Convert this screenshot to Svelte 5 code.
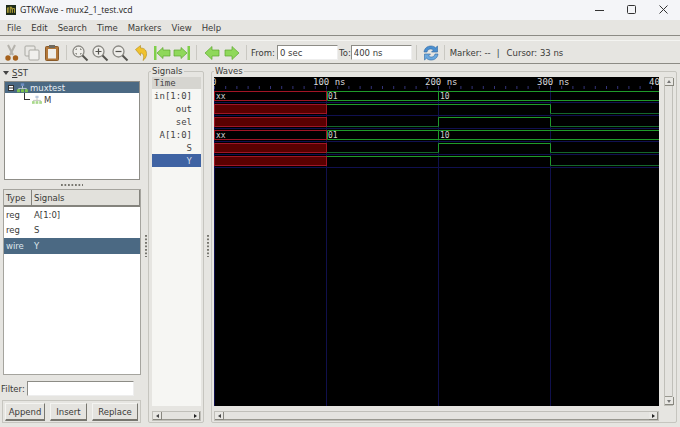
<script>
  const menus = ["File", "Edit", "Search", "Time", "Markers", "View", "Help"];
  const names = [
    { label: "in[1:0]" },
    { label: "out" },
    { label: "sel" },
    { label: "A[1:0]" },
    { label: "S" },
    { label: "Y", selected: true },
  ];
  const sst = [
    { type: "reg", name: "A[1:0]" },
    { type: "reg", name: "S" },
    { type: "wire", name: "Y", selected: true },
  ];

  // wave canvas: 445 x 329, 100 ns is about 112 px
  const W = 445;
  const H = 329;
  const X100 = 112.5;
  const X200 = 224.5;
  const X300 = 336.5;
  const gridX = [0.5, X100, X200, X300];
  const ticks = [];
  for (let x = 0.5; x < W; x += 11.2) ticks.push(x);
  const rowY = [14, 27, 40, 53, 66, 79];

  const buses = [
    { y: 14, a: "01", b: "10" },
    { y: 53, a: "01", b: "10" },
  ];
  // bright for the driven high parts, dim for the low parts
  const bits = [
    { y: 27, high: "M112.5 27.500H336.5V36.500", low: "M336.5 36.500H445" },
    { y: 40, high: "M224.5 49.500V40.500H336.5V49.500", low: "M112.5 49.500H224.5M336.5 49.500H445" },
    { y: 66, high: "M224.5 75.500V66.500H336.5V75.500", low: "M112.5 75.500H224.5M336.5 75.500H445" },
    { y: 79, high: "M112.5 79.500H336.5V88.500", low: "M336.5 88.500H445" },
  ];
</script>

<div class="window">
  <header class="titlebar">
    <svg class="appicon" width="10" height="10" viewBox="0 0 14 14">
      <rect width="14" height="14" fill="#1d2a1a" />
      <path d="M2 11V4h2v7M5 3h3v3M6.500 3v8M9 11V5h3v6" fill="none" stroke="#c4b13c" stroke-width="1.200" />
    </svg>
    <span class="title">GTKWave - mux2_1_test.vcd</span>
    <div class="winbtns">
      <svg width="12" height="12" viewBox="0 0 12 12"><path d="M1 6.500h9" stroke="#333" /></svg>
      <svg width="12" height="12" viewBox="0 0 12 12"><rect x="1.500" y="1.500" width="8" height="8" rx="1" fill="none" stroke="#333" /></svg>
      <svg width="12" height="12" viewBox="0 0 12 12"><path d="M1.500 1.500l8 8m0-8l-8 8" stroke="#333" /></svg>
    </div>
  </header>

  <nav class="menubar">
    {#each menus as m}
      <span>{m}</span>
    {/each}
  </nav>

  <div class="toolbar">
    <button class="tool" aria-label="Cut">
      <svg width="18" height="18" viewBox="0 0 18 18">
        <path d="M5 1l5 10M12 1L7 11" stroke="#b5b3ac" stroke-width="2" fill="none" />
        <circle cx="5" cy="14" r="2.700" fill="#a5611c" />
        <circle cx="12.500" cy="14" r="2.700" fill="#a5611c" />
      </svg>
    </button>
    <button class="tool" aria-label="Copy">
      <svg width="18" height="18" viewBox="0 0 18 18">
        <rect x="2" y="2" width="10" height="10" rx="1" fill="#e9e8e4" stroke="#a9a8a2" />
        <rect x="6" y="6" width="10" height="10" rx="1" fill="#f1f0ed" stroke="#a9a8a2" />
      </svg>
    </button>
    <button class="tool" aria-label="Paste">
      <svg width="18" height="18" viewBox="0 0 18 18">
        <rect x="2.500" y="2.500" width="13" height="14" rx="1" fill="#b3783a" stroke="#8a5a28" />
        <rect x="5" y="5" width="8" height="9.500" fill="#efeeea" />
        <rect x="6" y="1" width="6" height="3" fill="#6e6a60" />
      </svg>
    </button>
    <i class="sep"></i>
    <button class="tool" aria-label="Zoom fit">
      <svg width="18" height="18" viewBox="0 0 18 18">
        <circle cx="7.500" cy="7.500" r="5.500" fill="#efeeea" stroke="#8b8a85" stroke-width="1.300" />
        <path d="M11.500 11.500l5 5" stroke="#55544f" stroke-width="2" />
        <path d="M5 6V5h1M9 5h1v1M10 9v1H9M6 10H5V9" fill="none" stroke="#77766f" />
      </svg>
    </button>
    <button class="tool" aria-label="Zoom in">
      <svg width="18" height="18" viewBox="0 0 18 18">
        <circle cx="7.500" cy="7.500" r="5.500" fill="#efeeea" stroke="#8b8a85" stroke-width="1.300" />
        <path d="M11.500 11.500l5 5" stroke="#55544f" stroke-width="2" />
        <path d="M4.500 7.500h6M7.500 4.500v6" stroke="#55544f" stroke-width="1.200" />
      </svg>
    </button>
    <button class="tool" aria-label="Zoom out">
      <svg width="18" height="18" viewBox="0 0 18 18">
        <circle cx="7.500" cy="7.500" r="5.500" fill="#efeeea" stroke="#8b8a85" stroke-width="1.300" />
        <path d="M11.500 11.500l5 5" stroke="#55544f" stroke-width="2" />
        <path d="M4.500 7.500h6" stroke="#55544f" stroke-width="1.200" />
      </svg>
    </button>
    <button class="tool pushed" aria-label="Undo zoom">
      <svg width="18" height="18" viewBox="0 0 18 18">
        <path d="M2.500 5.500L7.500 1.500V4c4.500 0 6.500 3 6 7-.3 2-1.500 4-3.500 5.500 1-3 1.500-7-2.500-7.500v2.500z" fill="#f0c22e" stroke="#b08a1a" stroke-width=".6" />
      </svg>
    </button>
    <button class="tool" aria-label="Go to start">
      <svg width="18" height="18" viewBox="0 0 18 18">
        <path d="M1 2h2.500v14H1z" fill="#7fcf4a" />
        <path d="M4 9l6-5.500V6h7v6h-7v2.500z" fill="#8fd85a" stroke="#5da82f" stroke-width=".7" />
      </svg>
    </button>
    <button class="tool" aria-label="Go to end">
      <svg width="18" height="18" viewBox="0 0 18 18">
        <path d="M14.500 2H17v14h-2.500z" fill="#7fcf4a" />
        <path d="M14 9L8 3.500V6H1v6h7v2.500z" fill="#8fd85a" stroke="#5da82f" stroke-width=".7" />
      </svg>
    </button>
    <i class="sep"></i>
    <button class="tool pushed" aria-label="Shift left">
      <svg width="18" height="18" viewBox="0 0 18 18">
        <path d="M2 9l7-6.500V6h7v6H9v3.500z" fill="#8fd85a" stroke="#5da82f" stroke-width=".7" />
      </svg>
    </button>
    <button class="tool" aria-label="Shift right">
      <svg width="18" height="18" viewBox="0 0 18 18">
        <path d="M16 9L9 2.500V6H2v6h7v3.500z" fill="#8fd85a" stroke="#5da82f" stroke-width=".7" />
      </svg>
    </button>
    <i class="sep"></i>
    <label class="range from">From:<input value="0 sec" /></label>
    <label class="range to">To:<input value="400 ns" /></label>
    <i class="sep"></i>
    <button class="tool" aria-label="Reload">
      <svg width="18" height="18" viewBox="0 0 18 18">
        <path d="M2 8c.5-4 3.500-6 7-6 2 0 3.500.7 4.500 1.800L15.500 2v6h-6l2-2c-2.500-2-6-1-6.500 2z" fill="#4a8fd0" stroke="#2f679f" stroke-width=".6" />
        <path d="M16 10c-.5 4-3.500 6-7 6-2 0-3.500-.7-4.500-1.800L2.500 16v-6h6l-2 2c2.500 2 6 1 6.500-2z" fill="#6aa8de" stroke="#2f679f" stroke-width=".6" />
      </svg>
    </button>
    <i class="sep"></i>
    <span class="status">Marker: --</span>
    <span class="status bar">|</span>
    <span class="status">Cursor: 33 ns</span>
  </div>

  <main class="panes">
    <section class="left">
      <div class="sst-head"><span class="tri"></span><span><u>S</u>ST</span></div>
      <div class="tree">
        <div class="node top">
          <svg width="6" height="6" viewBox="0 0 6 6">
            <rect x=".5" y=".5" width="5" height="5" fill="#fff" stroke="#333" />
            <path d="M1 3h4" stroke="#333" />
          </svg>
          <svg width="11" height="10" viewBox="0 0 13 11">
            <rect x="4.500" y="0" width="4" height="3" fill="#6f8fc4" />
            <path d="M6.500 3v3M2 8V6h9v2" fill="none" stroke="#cfd6e2" />
            <rect x="0" y="7" width="3.500" height="3.500" fill="#7cc24f" />
            <rect x="4.700" y="7" width="3.500" height="3.500" fill="#7cc24f" />
            <rect x="9.400" y="7" width="3.500" height="3.500" fill="#7cc24f" />
          </svg>
          <span>muxtest</span>
        </div>
        <div class="node child">
          <i class="elbow"></i>
          <svg width="10" height="10" viewBox="0 0 13 11">
            <rect x="4.500" y="0" width="4" height="3" fill="#b9c8dd" />
            <path d="M6.500 3v3M2 8V6h9v2" fill="none" stroke="#b5b5b0" />
            <rect x="0" y="7" width="3.500" height="3.500" fill="#a9d98c" />
            <rect x="4.700" y="7" width="3.500" height="3.500" fill="#a9d98c" />
            <rect x="9.400" y="7" width="3.500" height="3.500" fill="#a9d98c" />
          </svg>
          <span>M</span>
        </div>
      </div>
      <div class="grip h"></div>
      <div class="table">
        <div class="thead">
          <span class="col-type">Type</span>
          <span class="col-name">Signals</span>
        </div>
        {#each sst as row}
          <div class="trow" class:selected={row.selected}>
            <span class="col-type">{row.type}</span>
            <span class="col-name">{row.name}</span>
          </div>
        {/each}
      </div>
      <label class="filter">Filter:<input /></label>
      <div class="actions">
        <button class="btn append">Append</button>
        <button class="btn insert">Insert</button>
        <button class="btn replace">Replace</button>
      </div>
    </section>

    <div class="grip v first"></div>

    <section class="frame signals">
      <span class="legend">Signals</span>
      <div class="siglist">
        <div class="sig time">Time</div>
        {#each names as n}
          <div class="sig" class:selected={n.selected}>{n.label}</div>
        {/each}
      </div>
      <div class="hscroll">
        <span class="arrow l"></span>
        <span class="thumb"></span>
        <span class="arrow r"></span>
      </div>
    </section>

    <div class="grip v"></div>

    <section class="frame waves">
      <span class="legend">Waves</span>
      <div class="wavegrid">
        <svg class="wave" width={W} height={H} viewBox="0 0 {W} {H}">
          <rect width={W} height={H} fill="#000" />
          {#each rowY as y}
            <path d="M0 {y + 11.5}H{W}" stroke="#101050" />
          {/each}
          {#each gridX as x}
            <path d="M{x} 10V{H}" stroke="#10104c" />
          {/each}
          {#each ticks as x}
            <path d="M{x} 9V12" stroke="#33337a" />
          {/each}
          <text x="-3" y="8" class="tick">0</text>
          <text x="99" y="8" class="tick">100 ns</text>
          <text x="211" y="8" class="tick">200 ns</text>
          <text x="323" y="8" class="tick">300 ns</text>
          <text x="435" y="8" class="tick">400</text>

          {#each buses as b}
            <rect x=".5" y={b.y + .5} width={X100 - .5} height="9" fill="#000" stroke="#a01525" />
            <text x="2" y={b.y + 7.500} class="val">xx</text>
            <path d="M{W} {b.y + .5}H{X100 + 1}V{b.y + 9.500}H{W}M{X200} {b.y + .5}V{b.y + 9.500}" fill="none" stroke="#1f9a2a" />
            <text x={X100 + 1.500} y={b.y + 7.500} class="val">{b.a}</text>
            <text x={X200 + 1.500} y={b.y + 7.500} class="val">{b.b}</text>
          {/each}
          {#each bits as b}
            <rect x=".5" y={b.y + .5} width={X100 - .5} height="9" fill="#5a0000" stroke="#a01525" />
            <path d={b.low} fill="none" stroke="#14662a" />
            <path d={b.high} fill="none" stroke="#1f9a2a" />
          {/each}
        </svg>
        <div class="vscroll">
          <span class="arrow u"></span>
          <span class="thumb"></span>
          <span class="arrow d"></span>
        </div>
        <div class="hscroll">
          <span class="arrow l"></span>
          <span class="thumb"></span>
          <span class="arrow r"></span>
        </div>
      </div>
    </section>
  </main>
</div>

<style>
  :global(body) {
    margin: 0;
    overflow: hidden;
  }

  .window,
  .window * {
    box-sizing: border-box;
  }

  .window {
    width: 680px;
    height: 427px;
    display: flex;
    flex-direction: column;
    background: #e6e5e1;
    color: #3a3a38;
    font-family: "DejaVu Sans", sans-serif;
    font-size: 8.5px;
    overflow: hidden;
  }

  .titlebar {
    height: 20px;
    display: flex;
    align-items: center;
    padding-left: 6px;
    background: #f4f5f8;
    flex: none;
  }

  .appicon {
    margin-right: 4px;
  }

  .title {
    font-family: "Open Sans", sans-serif;
    font-size: 8.7px;
    color: #222;
  }

  .winbtns {
    margin-left: auto;
    display: flex;
    gap: 20px;
    padding-right: 10px;
  }

  .menubar {
    height: 16px;
    display: flex;
    align-items: center;
    gap: 10px;
    padding-left: 7px;
    flex: none;
    border-bottom: 1px solid #8c8b85;
  }

  .toolbar {
    margin-top: 4px;
    height: 24px;
    display: flex;
    align-items: center;
    padding: 1px 0 0 2px;
    border-top: 1px solid #f4f4f1;
    border-bottom: 1px solid #8c8b85;
    flex: none;
  }

  .tool {
    width: 20px;
    height: 20px;
    padding: 0 1px;
    border: 0;
    background: none;
    display: flex;
    align-items: center;
    justify-content: center;
    flex: none;
  }

  .pushed {
    margin-left: 2px;
  }

  .sep {
    width: 8px;
    height: 15px;
    flex: none;
    background: linear-gradient(#c9c8c2, #c9c8c2) center / 1px 100% no-repeat;
  }

  .range {
    display: flex;
    align-items: center;
    white-space: nowrap;
  }

  .range input {
    width: 61px;
  }

  .from {
    margin-left: 1px;
    gap: 2px;
  }

  .to {
    margin-left: 1px;
    margin-right: 1px;
  }

  input {
    height: 15px;
    padding: 0 2px;
    border: 1px solid #8d8c86;
    border-right-color: #eee;
    border-bottom-color: #eee;
    background: #fff;
    font: inherit;
    color: #3a3a38;
    outline: none;
  }

  .status {
    margin-left: 1px;
    white-space: nowrap;
  }

  .status.bar {
    margin: 0 6px;
  }

  .panes {
    flex: 1;
    min-height: 0;
    display: flex;
  }

  .left {
    width: 143px;
    flex: none;
    display: flex;
    flex-direction: column;
    padding: 0 2px;
  }

  .sst-head {
    height: 17px;
    display: flex;
    align-items: center;
    gap: 3px;
    padding-left: 1px;
    flex: none;
  }

  .tri {
    width: 0;
    height: 0;
    border: 3px solid transparent;
    border-top: 4px solid #444;
    border-bottom: 0;
  }

  .tree {
    height: 99px;
    margin: 0 1px 0 2px;
    border: 1px solid #8f8e88;
    background: #fff;
    flex: none;
  }

  .node {
    display: flex;
    align-items: center;
  }

  .top {
    background: #4b6983;
    color: #e8edf2;
    padding-left: 3px;
    height: 11px;
    gap: 3px;
  }

  .top span {
    margin-left: -1px;
  }

  .child {
    height: 13px;
    padding-left: 19px;
    gap: 2px;
  }

  .elbow {
    width: 6px;
    height: 7px;
    margin-top: -6px;
    border-left: 1px solid #333;
    border-bottom: 1px solid #333;
  }

  .grip {
    flex: none;
    background-image: radial-gradient(circle at 1px 1px, #77766f 1px, transparent 1.1px);
  }

  .grip.h {
    width: 22px;
    height: 2px;
    margin: 3.500px auto;
    background-size: 3.500px 2px;
    background-repeat: repeat-x;
  }

  .grip.v {
    width: 2px;
    height: 22px;
    margin: auto 2.500px;
    background-size: 2px 3.500px;
    background-repeat: repeat-y;
  }

  .grip.v.first {
    margin: auto 1.500px;
  }

  .table {
    height: 186px;
    margin-left: 1px;
    border: 1px solid #a5a49e;
    background: #fff;
    flex: none;
  }

  .thead {
    height: 17px;
    display: flex;
    align-items: center;
    background: #e2e1dc;
    border-bottom: 2px solid #84837d;
  }

  .thead .col-name {
    border-left: 1px solid #84837d;
    height: 100%;
    display: flex;
    align-items: center;
    padding-left: 2px;
    flex: 1;
    border-right: 1px solid #84837d;
  }

  .col-type {
    width: 27px;
    padding-left: 2px;
    flex: none;
  }

  .trow {
    height: 15.500px;
    display: flex;
    align-items: center;
  }

  .trow .col-name {
    padding-left: 3px;
  }

  .trow.selected {
    background: #4b6983;
    color: #dfe6ec;
  }

  .filter {
    display: flex;
    align-items: center;
    height: 15px;
    margin: 6px 0 0 -1px;
    gap: 2px;
    flex: none;
  }

  .filter input {
    width: 107px;
  }

  .actions {
    display: flex;
    gap: 5px;
    height: 23px;
    margin-top: 4px;
    padding: 2px 2px;
    border: 1px solid #c6c5bf;
    flex: none;
  }

  .btn {
    height: 18px;
    padding: 0;
    flex: none;
    border: 1px solid #f4f4f1;
    border-right-color: #77766f;
    border-bottom: 2px solid #77766f;
    background: #e4e3df;
    font: inherit;
    color: #3a3a38;
  }

  .append {
    width: 40px;
  }

  .insert {
    width: 37px;
  }

  .replace {
    width: 46px;
  }

  .frame {
    position: relative;
    flex: none;
    margin: 7px 0 4px;
    padding: 5px 2px 1px;
    border: 1px solid #c6c5bf;
    border-radius: 2px;
    display: flex;
    flex-direction: column;
  }

  .legend {
    position: absolute;
    top: -6px;
    left: 2px;
    padding: 0 1px;
    background: #e6e5e1;
  }

  .signals {
    width: 56px;
    padding-left: 3px;
  }

  .waves {
    width: 466px;
  }

  .siglist {
    flex: 1;
    min-height: 0;
    margin-bottom: 5px;
    background: #f6f6f3;
    font-family: "DejaVu Sans Mono", monospace;
    font-size: 9px;
    color: #444;
  }

  .sig {
    height: 13px;
    line-height: 12px;
    text-align: right;
    padding: 1px 9px 0 2px;
  }

  .sig.time {
    text-align: left;
    background: #d6d5d0;
    height: 12px;
    line-height: 11px;
  }

  .sig.selected {
    background: #3f63a3;
    color: #d4dbe8;
  }

  .wavegrid {
    flex: 1;
    min-height: 0;
    display: grid;
    grid-template-columns: 445px 9px;
    grid-template-rows: 329px 10px;
    gap: 5px;
  }

  .wave {
    display: block;
  }

  .tick {
    fill: #d8d8d8;
    font-family: "DejaVu Sans Mono", monospace;
    font-size: 9px;
  }

  .val {
    fill: #d0d0d0;
    font-family: "DejaVu Sans Mono", monospace;
    font-size: 8px;
  }

  .hscroll,
  .vscroll {
    display: flex;
    background: #cfcec9;
    border: 1px solid #c0bfb9;
  }

  .hscroll {
    height: 10px;
    flex: none;
  }

  .vscroll {
    flex-direction: column;
    width: 9px;
  }

  .thumb {
    flex: 1;
    background: #e4e3df;
    border-bottom: 1px solid #999890;
  }

  .arrow {
    flex: none;
    width: 9px;
    height: 8px;
    background: #e8e7e3;
    box-shadow: inset -1px -1px 0 #88877f;
    position: relative;
  }

  .arrow::after {
    content: "";
    position: absolute;
    left: 2px;
    top: 2px;
    border: 2px solid transparent;
  }

  .arrow.l::after {
    left: 3px;
    border-right: 3px solid #444;
    border-left: 0;
  }

  .arrow.r::after {
    left: 3px;
    border-left: 3px solid #222;
    border-right: 0;
  }

  .arrow.u::after {
    top: 2px;
    border-bottom: 3px solid #777;
    border-top: 0;
  }

  .arrow.d::after {
    top: 3px;
    border-top: 3px solid #777;
    border-bottom: 0;
  }
</style>
